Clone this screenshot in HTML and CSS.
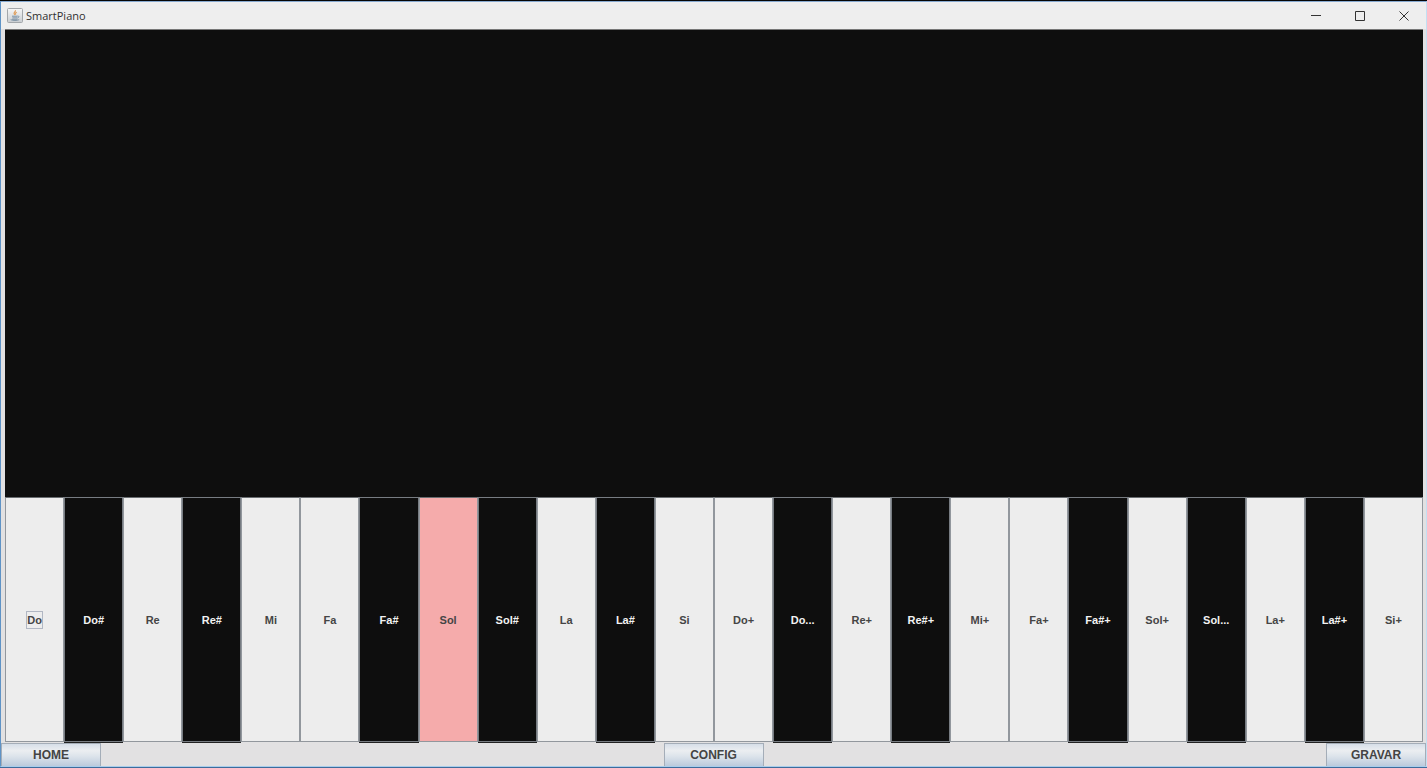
FILE: index.html
```html
<!DOCTYPE html>
<html lang="pt">
<head>
<meta charset="utf-8">
<title>SmartPiano</title>
<link rel="stylesheet" href="styles.css">
</head>
<body>
<div class="window">
  <header class="titlebar">
    <svg class="app-icon" viewBox="0 0 16 16" aria-hidden="true">
      <defs><linearGradient id="tile" x1="0" y1="0" x2="0" y2="1"><stop offset="0" stop-color="#f7f7f7"/><stop offset="1" stop-color="#c9cdd1"/></linearGradient></defs>
      <rect x=".5" y=".5" width="15" height="14" rx="1" fill="url(#tile)" stroke="#a3a7ab"/>
      <path d="M8.4 2.3c.8 1.3-2.3 2.2-1.2 3.7l.7 1M9.8 4.3c-1.4.7-1.9 1.3-1 2.4" fill="none" stroke="#e0a263" stroke-width="1.2"/>
      <path d="M5 8.2h5.5M5.4 9.9h4.8M10.6 8c1.8-.2 1.6 1.6-.2 2" fill="none" stroke="#7890a5"/>
      <path d="M3.7 11.6c1.5 1.2 7 1.2 8.5 0M5 11.3h5.5" fill="none" stroke="#8296a8"/>
    </svg>
    <h1 class="title">SmartPiano</h1>
    <div class="controls">
      <button class="control" type="button" aria-label="Minimizar"><svg viewBox="0 0 10 10"><path d="M0 4.5h10"/></svg></button>
      <button class="control" type="button" aria-label="Maximizar"><svg viewBox="0 0 10 10"><path d="M.5.5h9v9h-9z"/></svg></button>
      <button class="control" type="button" aria-label="Fechar"><svg viewBox="0 0 10 10"><path d="M.5.5l9 9M9.5.5l-9 9"/></svg></button>
    </div>
  </header>
  <main class="content">
    <section class="stage" aria-label="Painel"></section>
    <section class="keyboard" aria-label="Teclado">
      <button type="button" class="key white"><span class="focus">Do</span></button>
      <button type="button" class="key black">Do#</button>
      <button type="button" class="key white">Re</button>
      <button type="button" class="key black">Re#</button>
      <button type="button" class="key white">Mi</button>
      <button type="button" class="key white">Fa</button>
      <button type="button" class="key black">Fa#</button>
      <button type="button" class="key white pressed">Sol</button>
      <button type="button" class="key black">Sol#</button>
      <button type="button" class="key white">La</button>
      <button type="button" class="key black">La#</button>
      <button type="button" class="key white">Si</button>
      <button type="button" class="key white">Do+</button>
      <button type="button" class="key black">Do...</button>
      <button type="button" class="key white">Re+</button>
      <button type="button" class="key black">Re#+</button>
      <button type="button" class="key white">Mi+</button>
      <button type="button" class="key white">Fa+</button>
      <button type="button" class="key black">Fa#+</button>
      <button type="button" class="key white">Sol+</button>
      <button type="button" class="key black">Sol...</button>
      <button type="button" class="key white">La+</button>
      <button type="button" class="key black">La#+</button>
      <button type="button" class="key white">Si+</button>
    </section>
  </main>
  <footer class="toolbar">
    <button type="button" class="action">HOME</button>
    <button type="button" class="action">CONFIG</button>
    <button type="button" class="action">GRAVAR</button>
  </footer>
</div>
</body>
</html>
```
FILE: styles.css
```css
* { box-sizing: border-box; }

body {
  margin: 0;
  background: #050505;
}

button {
  margin: 0;
  padding: 0;
  border: 0;
  font: bold 11px/14px "Liberation Sans", Arial, sans-serif;
}

.window {
  display: flex;
  flex-direction: column;
  height: 100vh;
  border-top: 1px solid #050505;
  border-bottom: 1px solid #3d6c9c;
  background: #e2e1e2;
}

.titlebar {
  display: flex;
  align-items: center;
  height: 28px;
  padding-left: 6px;
  border-top: 1px solid #86a9d0;
  border-left: 1px solid #5f93c6;
  border-right: 1px solid #c3dff2;
  background: #eeeeee;
}

.app-icon {
  width: 16px;
  height: 16px;
}

.title {
  flex: 1;
  margin: 0 0 0 3px;
  color: #303030;
  font: 11px/16px "Open Sans", "Noto Sans", sans-serif;
}

.controls { display: flex; }

.control {
  display: grid;
  place-items: center;
  width: 44px;
  height: 24px;
  background: transparent;
}

.control svg {
  width: 10px;
  height: 10px;
  fill: none;
  stroke: #333333;
}

.content {
  display: flex;
  flex: 1;
  flex-direction: column;
  min-height: 0;
  padding: 0 3px 0 4px;
  border-left: 1px solid #5f93c6;
  border-right: 1px solid #c3dff2;
}

.stage {
  flex: 467;
  border-top: 1px solid #777777;
  background: #0e0e0e;
}

.keyboard {
  display: grid;
  flex: 245;
  grid-template-columns: repeat(24, minmax(0, 1fr));
  background: #ededed;
}

.key {
  border: 1px solid #92979d;
  border-top-color: #686c70;
}

.white {
  background: #ededed;
  color: #454545;
}

.black {
  border-color: #777c82;
  background: #0e0e0e;
  box-shadow: 0 1px #222222;
  color: #f2f2f2;
}

.pressed {
  background: #f5abab;
}

.focus {
  padding: 2px 0;
  border: 1px solid #b1b7c3;
}

.toolbar {
  display: flex;
  justify-content: space-between;
  height: 25px;
  padding-top: 1px;
  border-bottom: 1px solid #a9cdea;
  border-left: 1px solid #5f93c6;
  border-right: 1px solid #c3dff2;
}

.action {
  width: 100px;
  border: 1px solid #a4adb8;
  border-bottom: 0;
  background: linear-gradient(#d6dee8, #ebeef1 30%, #dde4eb 55%, #bccbdc);
  color: #444444;
  font-size: 12px;
}
```
